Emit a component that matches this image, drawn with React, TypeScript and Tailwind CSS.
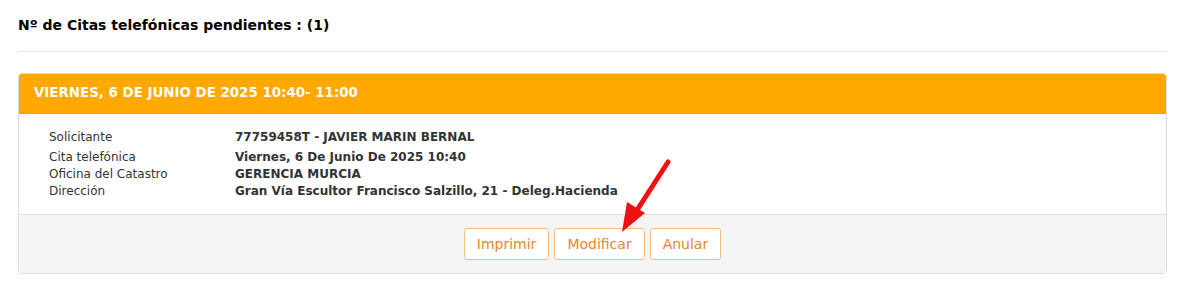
import React from 'react';

const rows = [
  { label: 'Solicitante', value: '77759458T - JAVIER MARIN BERNAL' },
  { label: 'Cita telefónica', value: 'Viernes, 6 De Junio De 2025 10:40' },
  { label: 'Oficina del Catastro', value: 'GERENCIA MURCIA' },
  { label: 'Dirección', value: 'Gran Vía Escultor Francisco Salzillo, 21 - Deleg.Hacienda' },
];

function Arrow() {
  return (
    <svg className="absolute left-[600px] top-[150px] pointer-events-none" width="90" height="95" viewBox="0 0 90 95">
      <line x1="68" y1="12" x2="32" y2="68" stroke="#ee1111" strokeWidth="5" strokeLinecap="round" />
      <polygon points="22,82 27,52 45,63" fill="#ee1111" />
    </svg>
  );
}

export default function App() {
  return (
    <div className="relative w-[1184px] h-[294px] bg-white px-[18px] pt-[16px] text-[#222]" style={{ fontFamily: '"DejaVu Sans", Verdana, sans-serif' }}>
      <h1 className="text-[14px] font-bold leading-[18px] text-black">Nº de Citas telefónicas pendientes : (1)</h1>
      <div className="mt-[17px] border-t border-[#e5e5e5] w-[1149px]" />
      <div className="mt-[21px] w-[1149px] rounded border border-[#dddddd] overflow-hidden">
        <div className="h-[40px] bg-[#ffa800] px-[15px] flex items-center border-b border-[#f0a000]">
          <span className="text-white font-bold text-[13.4px]">VIERNES, 6 DE JUNIO DE 2025 10:40- 11:00</span>
        </div>
        <div className="px-[30px] pt-[15px] pb-[14px] bg-white">
          {rows.map((r, i) => (
            <div key={r.label} className={`flex leading-[17px] ${i === 0 ? 'mb-[3px]' : ''}`}>
              <div className="w-[186px] text-[12px] text-[#333]">{r.label}</div>
              <div className="text-[12px] font-bold text-[#333]">{r.value}</div>
            </div>
          ))}
        </div>
        <div className="h-[59px] bg-[#f5f5f5] border-t border-[#dddddd] flex items-center justify-center gap-[5px]">
          {['Imprimir', 'Modificar', 'Anular'].map((b) => (
            <button key={b} className="h-[32px] px-[12px] rounded-[3px] border border-[#f5bd85] bg-white text-[#e8862a] text-[14px]">
              {b}
            </button>
          ))}
        </div>
      </div>
      <Arrow />
    </div>
  );
}
